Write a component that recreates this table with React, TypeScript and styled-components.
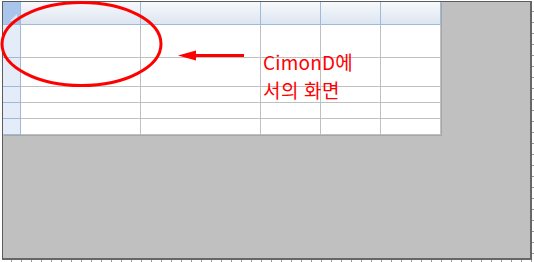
import React, { FC } from 'react'
import styled, { createGlobalStyle } from 'styled-components'

const GlobalStyle = createGlobalStyle`
    html, body {
        margin: 0;
        padding: 0;
        background: #ffffff;
    }
    body {
        font-family: "Noto Sans CJK KR", "Noto Sans", sans-serif;
    }
`

const Page = styled.div`
    position: relative;
    width: 534px;
    height: 262px;
    overflow: hidden;
    background:
        repeating-linear-gradient(to bottom, transparent 0 10px, #9a9a9a 10px 11px) right 0 top 1px / 2px 262px no-repeat,
        repeating-linear-gradient(to right, transparent 0 9px, #9a9a9a 9px 10px) left 2px bottom 0 / 534px 2px no-repeat,
        #ffffff;
`

const Frame = styled.div`
    box-sizing: border-box;
    margin: 1px 0 0 2px;
    width: 530px;
    height: 259px;
    border-left: 1px solid #5c5c5c;
    border-top: 1px solid #5c5c5c;
    border-right: 2px solid #666666;
    border-bottom: 2px solid #666666;
    background: #c0c0c0;
`

const Sheet = styled.div`
    display: grid;
    grid-template-columns: 18px 120px 120px 60px 60px 60px;
    grid-template-rows: 23px 33px 29px 16px 16px 16px;
    width: 438px;
    box-shadow: 1px 1px 0 #a6a6a6;
`

interface CellProps {
    $kind: 'corner' | 'colHead' | 'rowHead' | 'body'
}

const Cell = styled.div<CellProps>`
    box-sizing: border-box;
    position: relative;
    border-right: 1px solid ${(p) => (p.$kind === 'body' ? '#c0c0c0' : '#9fbad8')};
    border-bottom: 1px solid ${(p) => (p.$kind === 'body' ? '#c0c0c0' : '#9fbad8')};
    background: ${(p) =>
        p.$kind === 'corner'
            ? '#a9c5ec'
            : p.$kind === 'colHead'
            ? 'linear-gradient(to bottom, #f7f9fc 0%, #eaeff6 50%, #dce5f1 100%)'
            : p.$kind === 'rowHead'
            ? '#e4ecf7'
            : '#ffffff'};
`

const CornerMark = styled.span`
    position: absolute;
    right: 3px;
    bottom: 3px;
    width: 0;
    height: 0;
    border-left: 7px solid transparent;
    border-bottom: 7px solid #dbe6f6;
`

const Overlay = styled.svg`
    position: absolute;
    left: 0;
    top: 0;
    pointer-events: none;
`

const Note = styled.div`
    position: absolute;
    left: 263px;
    top: 48px;
    color: #ff0000;
    font-family: "Noto Sans CJK KR", "Noto Sans", sans-serif;
    font-size: 19px;
    line-height: 27.5px;
    white-space: nowrap;
`

const Line = styled.div<{ $wide?: boolean }>`
    display: block;
    letter-spacing: ${(p) => (p.$wide ? '0.6px' : '0.2px')};
`

const rows = [0, 1, 2, 3, 4, 5]
const cols = [0, 1, 2, 3, 4, 5]

const App: FC = () => {
    return (
        <Page>
            <GlobalStyle />
            <Frame>
                <Sheet>
                    {rows.map((r) =>
                        cols.map((c) => {
                            const kind = r === 0 && c === 0 ? 'corner' : r === 0 ? 'colHead' : c === 0 ? 'rowHead' : 'body'
                            return (
                                <Cell key={`${r}-${c}`} $kind={kind}>
                                    {kind === 'corner' && <CornerMark />}
                                </Cell>
                            )
                        })
                    )}
                </Sheet>
            </Frame>
            <Overlay width="534" height="262" viewBox="0 0 534 262">
                <ellipse cx="81.5" cy="44" rx="79.5" ry="41.5" fill="none" stroke="#ff0000" strokeWidth="3" />
                <line x1="192" y1="55.5" x2="244" y2="55.5" stroke="#ff0000" strokeWidth="3" />
                <polygon points="178,55.5 196,50.5 196,60.5" fill="#ff0000" />
            </Overlay>
            <Note>
                <Line>CimonD에</Line>
                <Line $wide>서의 화면</Line>
            </Note>
        </Page>
    )
}

export default App
